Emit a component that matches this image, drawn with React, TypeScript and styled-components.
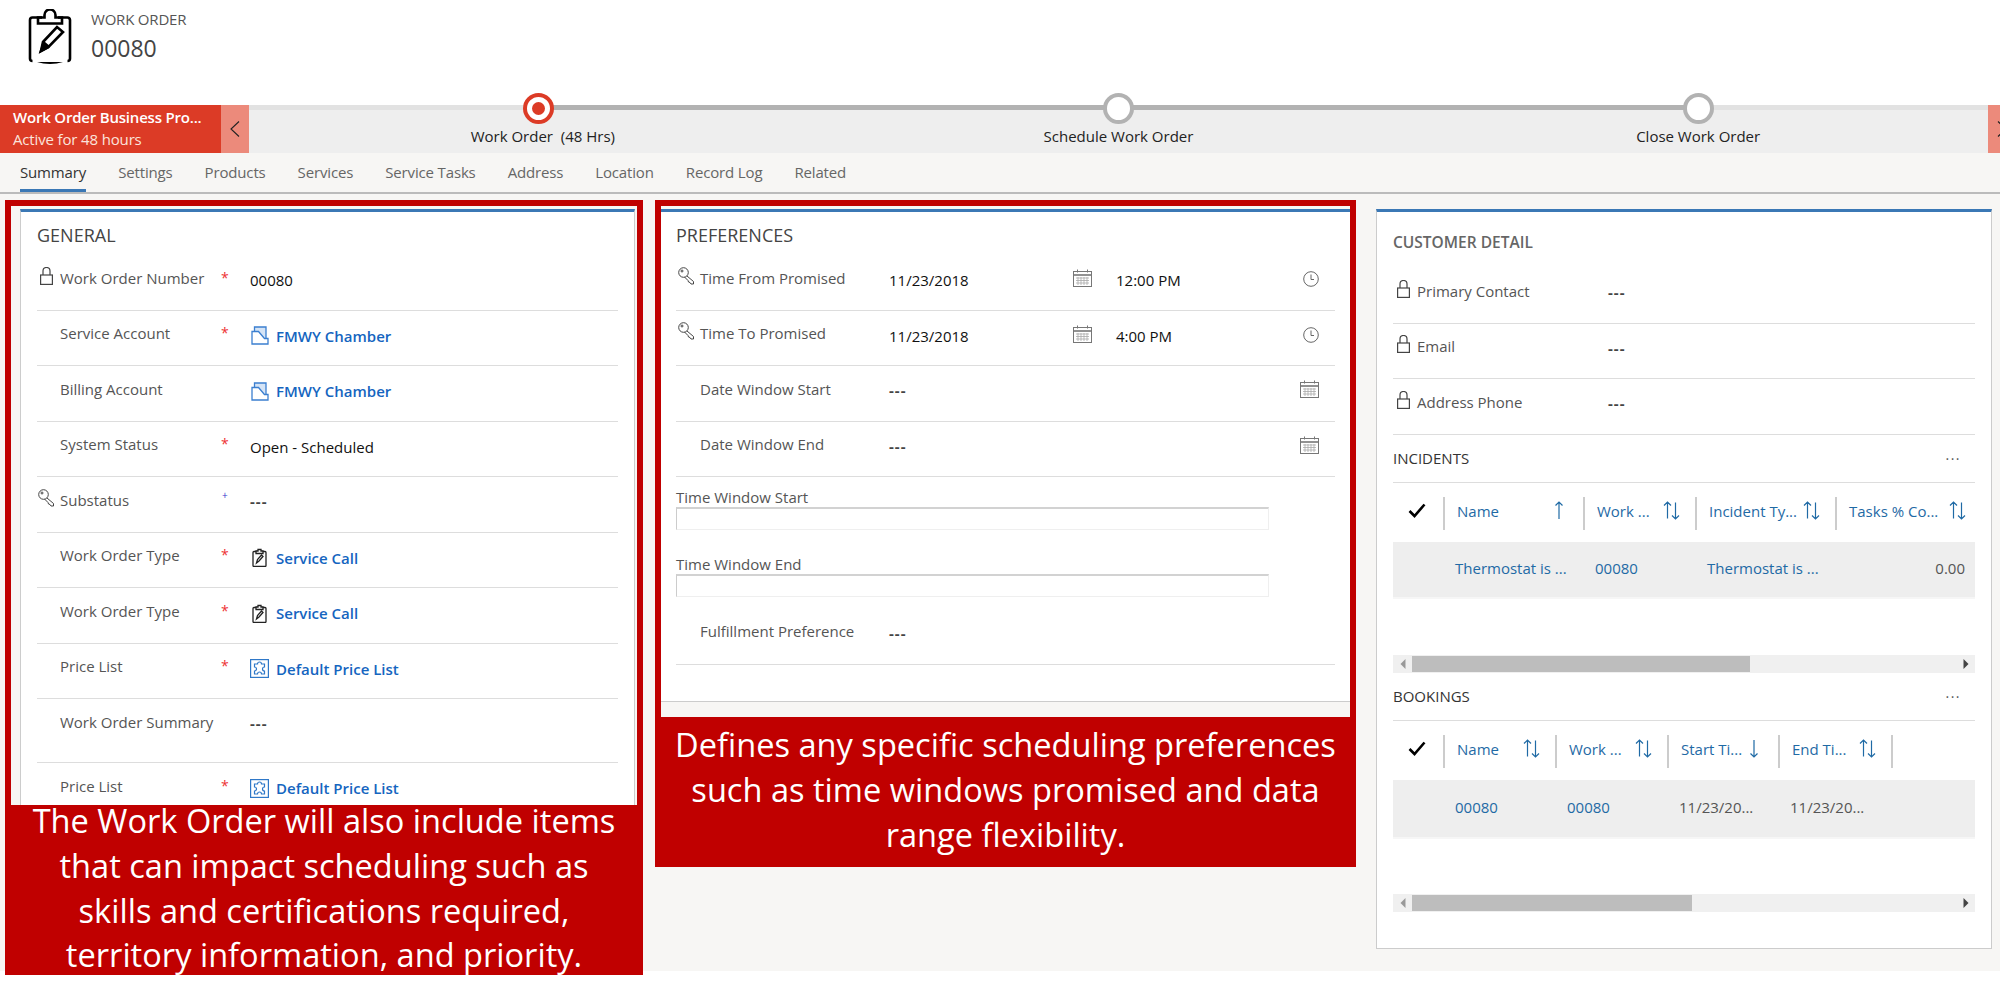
import React from 'react';
import styled, { createGlobalStyle } from 'styled-components';

const GlobalStyle = createGlobalStyle`
  html, body { margin: 0; padding: 0; background: #fff; }
  body {
    font-family: "Open Sans", "Liberation Sans", sans-serif;
    font-size: 15px;
    color: #555;
  }
`;

const Page = styled.div`
  position: relative;
  width: 2000px;
  height: 1001px;
  overflow: hidden;
`;

const Header = styled.header`
  height: 105px;
  display: flex;
  align-items: flex-start;
  padding: 9px 0 0 28px;
  box-sizing: border-box;
  gap: 19px;
`;

const EntityType = styled.div`
  font-size: 15px;
  line-height: 20px;
  letter-spacing: -0.2px;
  color: #555;
`;

const EntityName = styled.div`
  font-size: 23px;
  line-height: 36px;
  color: #444;
  margin-top: 1px;
`;

const ProcessBar = styled.div`
  display: flex;
  height: 48px;
  background: #eee;
`;

const ProcessFlag = styled.div`
  width: 221px;
  box-sizing: border-box;
  background: #dc3b26;
  color: #fff;
  padding: 2px 0 0 13px;
`;

const ProcessName = styled.div`
  font-size: 15px;
  font-weight: 600;
  line-height: 21px;
  letter-spacing: -0.2px;
  white-space: nowrap;
`;

const ProcessAge = styled.div`
  font-size: 15px;
  line-height: 22px;
  letter-spacing: -0.15px;
  color: #fbe3dc;
`;

const ProcessNav = styled.div`
  width: ${p => p.$width}px;
  box-sizing: border-box;
  padding-left: ${p => p.$inset}px;
  background: #ec8a7b;
  display: flex;
  align-items: center;
  overflow: hidden;
  color: #222;
`;

const Stages = styled.div`
  width: 1739px;
  display: grid;
  grid-template-columns: repeat(3, 1fr);
  background:
    linear-gradient(to right, #e2e2e2 0, #e2e2e2 290px, #b2b2b2 290px, #b2b2b2 1449px, #e2e2e2 1449px) top left / 100% 5px no-repeat,
    #eee;
`;

const Stage = styled.div`
  display: flex;
  flex-direction: column;
  align-items: center;
`;

const StageDot = styled.div`
  width: 31px;
  height: 31px;
  margin-top: -12px;
  box-sizing: border-box;
  border-radius: 50%;
  background: #fff;
  border: 4px solid ${p => (p.$active ? '#dc3b26' : '#b2b2b2')};
  display: flex;
  align-items: center;
  justify-content: center;
  &::after {
    content: '';
    display: ${p => (p.$active ? 'block' : 'none')};
    width: 13px;
    height: 13px;
    border-radius: 50%;
    background: #dc3b26;
  }
`;

const StageLabel = styled.div`
  margin-top: 1px;
  padding-left: ${p => p.$shift || 0}px;
  font-size: 15px;
  line-height: 22px;
  color: #222;
  white-space: pre;
`;

const Tabs = styled.nav`
  display: flex;
  gap: 32px;
  height: 41px;
  box-sizing: border-box;
  padding-left: 20px;
  background: #f7f6f4;
  border-bottom: 2px solid #bbb;
`;

const Tab = styled.div`
  position: relative;
  line-height: 39px;
  font-size: 15px;
  letter-spacing: -0.15px;
  color: ${p => (p.$active ? '#333' : '#666')};
  &::after {
    content: '';
    display: ${p => (p.$active ? 'block' : 'none')};
    position: absolute;
    left: 0;
    right: 0;
    bottom: 0;
    height: 3px;
    background: #3b78b5;
  }
`;

const Main = styled.main`
  display: flex;
  align-items: flex-start;
  gap: 24px;
  height: 777px;
  box-sizing: border-box;
  padding: 15px 8px 0 20px;
  background: #f7f6f4;
`;

const Card = styled.section`
  width: ${p => p.$width}px;
  height: ${p => p.$height}px;
  box-sizing: border-box;
  padding: 0 16px;
  background: #fff;
  border: 1px solid #ccc;
  border-top: 3px solid #3b78b5;
  overflow: hidden;
`;

const CardTitle = styled.h2`
  margin: 0;
  height: 43px;
  box-sizing: border-box;
  padding-top: 10px;
  font-size: 18px;
  line-height: 26px;
  font-weight: 400;
  color: #444;
`;

const SubTitle = styled.h3`
  margin: 0;
  height: 56px;
  box-sizing: border-box;
  padding-top: 19px;
  font-size: 15.5px;
  line-height: 22px;
  font-weight: 600;
  color: #666;
`;

const Row = styled.div`
  display: grid;
  grid-template-columns: ${p => p.$columns};
  height: ${p => p.$height || 55.5}px;
  box-sizing: border-box;
  padding-top: ${p => p.$top ?? 11.5}px;
  border-bottom: 1.5px solid #ddd;
  align-items: start;
`;

const IconSlot = styled.div`
  height: 22px;
  margin-top: -2px;
  display: flex;
  align-items: center;
  justify-content: center;
  padding-right: 4px;
  color: #444;
`;

const Label = styled.div`
  font-size: 15px;
  line-height: 22px;
  color: #555;
  white-space: nowrap;
`;

const Required = styled.div`
  font-size: 14px;
  line-height: 20px;
  margin-top: 1px;
  color: #e33;
`;

const Recommended = styled.div`
  font-size: 10px;
  line-height: 12px;
  padding-left: 1px;
  color: #33c;
`;

const Value = styled.div`
  display: flex;
  align-items: center;
  gap: 7px;
  margin-top: 2.5px;
  font-size: 15px;
  line-height: 22px;
  color: #111;
  white-space: nowrap;
`;

const Dashes = styled(Value)`
  margin-top: 1.5px;
  font-weight: 700;
  letter-spacing: 1px;
  color: #444;
`;

const LinkIcon = styled.span`
  width: 19px;
  display: flex;
  justify-content: center;
`;

const LinkText = styled.span`
  color: #1565c0;
  font-weight: 600;
`;

const Cell = styled.div`
  height: 22px;
  margin-top: 0.5px;
  display: flex;
  align-items: center;
  color: #666;
`;

const ClockCell = styled(Cell)`
  margin-top: 1.5px;
`;

const FieldLabel = styled(Label)`
  line-height: 20px;
  margin-top: ${p => p.$top}px;
`;

const TextBox = styled.div`
  width: 593px;
  height: 23px;
  box-sizing: border-box;
  border: 1px solid #efefef;
  border-top: 2px solid #d2d2d2;
  border-left: 1px solid #ccc;
`;

const GridTitle = styled.div`
  display: flex;
  align-items: center;
  justify-content: space-between;
  height: 48px;
  box-sizing: border-box;
  border-bottom: 1.5px solid #ddd;
  font-size: 15px;
  font-weight: 500;
  color: #333;
`;

const More = styled.span`
  padding-right: 14px;
  padding-bottom: 8px;
  letter-spacing: 1.5px;
  font-size: 14px;
  color: #555;
`;

const GridHead = styled.div`
  display: grid;
  grid-template-columns: ${p => p.$columns};
  height: 33px;
  margin: 14px 0 12px;
`;

const CheckCell = styled.div`
  display: flex;
  align-items: center;
  justify-content: flex-start;
  padding: 0 0 5px 15px;
`;

const HeadCell = styled.div`
  display: flex;
  align-items: center;
  justify-content: space-between;
  box-sizing: border-box;
  padding: 0 ${p => p.$pad ?? 15}px 5px 12px;
  border-left: 2px solid #ccc;
  font-size: 15px;
  color: #1f6aa5;
  white-space: nowrap;
  overflow: hidden;
`;

const GridRow = styled.div`
  display: grid;
  grid-template-columns: ${p => p.$columns};
  height: ${p => p.$height}px;
  padding-bottom: 2px;
  align-items: center;
  background: #eee;
  border-bottom: 2px solid #f6f6f6;
  box-sizing: border-box;
`;

const GridCell = styled.div`
  padding-left: 12px;
  font-size: 15px;
  white-space: nowrap;
  color: ${p => (p.$link ? '#1f6aa5' : '#555')};
  ${p => p.$right && 'text-align: right; padding-right: 10px;'}
`;

const ScrollBar = styled.div`
  display: flex;
  align-items: stretch;
  height: 18px;
  margin-top: ${p => p.$top}px;
  background: #f0f0f0;
  color: #555;
`;

const ScrollEnd = styled.div`
  width: 19px;
  display: flex;
  align-items: center;
  justify-content: center;
  color: ${p => p.$color};
`;

const ScrollThumb = styled.div`
  height: 16px;
  margin-top: 1px;
  background: #bdbdbd;
`;

const ScrollTrack = styled.div`
  flex: 1;
`;

const Callout = styled.div`
  position: absolute;
  left: ${p => p.$left}px;
  top: 200px;
  width: ${p => p.$width}px;
  height: ${p => p.$height}px;
  box-sizing: border-box;
  display: flex;
  flex-direction: column;
  border: solid #c00000;
  border-width: 6px 6px 0;
`;

const CalloutWindow = styled.div`
  flex: 1;
`;

const CalloutText = styled.div`
  margin: 0 -6px;
  height: ${p => p.$height}px;
  box-sizing: border-box;
  display: flex;
  align-items: center;
  padding: 0 ${p => p.$inset}px 3px;
  background: #c00000;
  color: #fff;
  font-size: 32.6px;
  line-height: 44.8px;
  text-align: center;
`;

const WorkOrderLogo = () => (
  <svg width="44" height="56" viewBox="0 0 44 56" fill="none" stroke="#000" strokeWidth="2.6">
    <path d="M14 8.500H4.500A2.500 2.500 0 0 0 2 11v38.500c0 1.500 1 2.500 2.500 2.500M30 8.500h9.500A2.500 2.500 0 0 1 42 11v38.500c0 1.500-1 2.500-2.500 2.500" />
    <path d="M10 14.500V8.500h6.500V6a5.500 5.500 0 0 1 11 0v2.500H34v6z" />
    <path d="M13 42l2-9 14-15 6 5-14.500 15z" />
    <path d="M15 33l6 5" />
    <path d="M13 42l2.500-7 4 3.500z" fill="#000" />
    <path d="M9 53c8 2.500 18 2.500 26 0z" fill="#000" stroke="none" />
  </svg>
);

const LockIcon = () => (
  <svg width="13" height="18" viewBox="0 0 13 18" fill="none" stroke="#444" strokeWidth="1.2">
    <rect x="0.600" y="8" width="11.800" height="9.400" />
    <path d="M3 8V4a3.500 3.500 0 0 1 7 0v4" />
  </svg>
);

const KeyIcon = () => (
  <svg width="17" height="18" viewBox="0 0 17 18" fill="none" stroke="#444" strokeWidth="1">
    <circle cx="5.500" cy="5.500" r="4.800" />
    <circle cx="4" cy="4" r="1" />
    <path d="M9 9l6.500 5.500v2.500h-2.500l-1-1.500-1.500-.5-.5-1.500-3.500-3.500" />
  </svg>
);

const AccountIcon = () => (
  <svg width="18" height="19" viewBox="0 0 18 19" fill="none" stroke="#3b7fd0" strokeWidth="1.300">
    <path d="M3.500 6V1h11.500v11" fill="#d5e4f6" />
    <path d="M1 5.500h6.500l6 7H17V18H1z" fill="#fff" />
  </svg>
);

const ClipboardIcon = () => (
  <svg width="15" height="19" viewBox="0 0 15 19" fill="none" stroke="#222" strokeWidth="1.300">
    <rect x="1" y="3.500" width="13" height="15" rx="1" />
    <path d="M4 5.500V3h2V1.500h3V3h2v2.500z" fill="#fff" />
    <path d="M4.500 15l1-3.500 4-4.500 1.500 1.500-4 4.500z" />
  </svg>
);

const PriceListIcon = () => (
  <svg width="19" height="19" viewBox="0 0 19 19" fill="none" stroke="#2f78c8" strokeWidth="1.2">
    <rect x="0.600" y="0.600" width="17.800" height="17.800" />
    <path d="M7.500 5a2 2 0 0 1 4 0h3v3a2 2 0 0 0 0 4v3h-3a2 2 0 0 0-4 0h-3v-3a2 2 0 0 0 0-4V5z" />
  </svg>
);

const CalendarIcon = () => (
  <svg width="19" height="18" viewBox="0 0 19 18" fill="none" stroke="#777" strokeWidth="1">
    <rect x="0.500" y="2.500" width="18" height="15" />
    <path d="M0.500 6h18" strokeWidth="1.600" />
    <path d="M4.500 0.500v3M14.500 0.500v3" />
    <path d="M3 9h13M3 11.500h13M3 14h13M5 8v8M8 8v8M11 8v8M14 8v8" stroke="#aaa" strokeWidth="0.800" />
  </svg>
);

const ClockIcon = () => (
  <svg width="16" height="16" viewBox="0 0 16 16" fill="none" stroke="#666" strokeWidth="1">
    <circle cx="8" cy="8" r="7.300" />
    <path d="M8 3.500V8.500H11" />
  </svg>
);

const Chevron = () => (
  <svg width="10" height="16" viewBox="0 0 10 16" fill="none" stroke="currentColor" strokeWidth="1.100" style={{ flex: 'none' }}>
    <path d="M9 0.500L1 8l8 7.500" />
  </svg>
);

const ChevronRight = () => (
  <svg width="10" height="16" viewBox="0 0 10 16" fill="none" stroke="currentColor" strokeWidth="1.100" style={{ flex: 'none' }}>
    <path d="M1 0.500L9 8 1 15.500" />
  </svg>
);

const Check = () => (
  <svg width="18" height="15" viewBox="0 0 18 15" fill="none" stroke="#000" strokeWidth="2.600">
    <path d="M1.500 8l5 5L16.500 1.500" />
  </svg>
);

const Sort = ({ dir }: { dir: 'up' | 'down' | 'both' }) => (
  <svg width="17" height="19" viewBox="0 0 17 19" fill="none" stroke="#1f6aa5" strokeWidth="1.200" style={{ flex: 'none' }}>
    {dir === 'both' && <path d="M4.500 17.500V1M1 4.500L4.500 1 8 4.500M12.500 1.500V18M9 14.500l3.500 3.500 3.500-3.500" />}
    {dir === 'up' && <path d="M8 18V1M4.500 4.500L8 1l3.500 3.500" />}
    {dir === 'down' && <path d="M8 1v17M4.500 14.500L8 18l3.500-3.500" />}
  </svg>
);

const ScrollArrow = ({ right }: { right?: boolean }) => (
  <svg width="6" height="10" viewBox="0 0 6 10" fill="currentColor">
    <path d={right ? 'M0.500 0L5.500 5 0.500 10z' : 'M5.500 0L0.500 5l5 5z'} />
  </svg>
);

const GENERAL_COLUMNS = '23px 161px 29px 1fr';
const DATETIME_COLUMNS = '24px 189px 184px 43px 187px 1fr';
const DATE_COLUMNS = '24px 189px 1fr 35px';
const CUSTOMER_COLUMNS = '24px 191px 1fr';
const INCIDENT_COLUMNS = '50px 140px 112px 140px 140px';
const BOOKING_COLUMNS = '50px 112px 112px 111px 113px 1fr';

const generalRows = [
  { label: 'Work Order Number', icon: <LockIcon />, star: true, value: '00080' },
  { label: 'Service Account', star: true, link: 'FMWY Chamber', linkIcon: <AccountIcon /> },
  { label: 'Billing Account', link: 'FMWY Chamber', linkIcon: <AccountIcon /> },
  { label: 'System Status', star: true, value: 'Open - Scheduled' },
  { label: 'Substatus', icon: <KeyIcon />, recommended: true, dashes: true },
  { label: 'Work Order Type', star: true, link: 'Service Call', linkIcon: <ClipboardIcon /> },
  { label: 'Work Order Type', star: true, link: 'Service Call', linkIcon: <ClipboardIcon /> },
  { label: 'Price List', star: true, link: 'Default Price List', linkIcon: <PriceListIcon /> },
  { label: 'Work Order Summary', dashes: true, height: 64 },
  { label: 'Price List', star: true, link: 'Default Price List', linkIcon: <PriceListIcon /> },
];

const incidentHeads = [
  { name: 'Name', dir: 'up' },
  { name: 'Work ...', dir: 'both' },
  { name: 'Incident Ty...', dir: 'both' },
  { name: 'Tasks % Co...', dir: 'both', pad: 9 },
] as const;

const bookingHeads = [
  { name: 'Name', dir: 'both' },
  { name: 'Work ...', dir: 'both' },
  { name: 'Start Ti...', dir: 'down' },
  { name: 'End Ti...', dir: 'both' },
] as const;

const tabs = ['Summary', 'Settings', 'Products', 'Services', 'Service Tasks', 'Address', 'Location', 'Record Log', 'Related'];

export default function App() {
  return (
    <Page>
      <GlobalStyle />
      <Header>
        <WorkOrderLogo />
        <div>
          <EntityType>WORK ORDER</EntityType>
          <EntityName>00080</EntityName>
        </div>
      </Header>

      <ProcessBar>
        <ProcessFlag>
          <ProcessName>Work Order Business Pro...</ProcessName>
          <ProcessAge>Active for 48 hours</ProcessAge>
        </ProcessFlag>
        <ProcessNav $width={28} $inset={9}><Chevron /></ProcessNav>
        <Stages>
          <Stage>
            <StageDot $active />
            <StageLabel $shift={8}>Work Order  (48 Hrs)</StageLabel>
          </Stage>
          <Stage>
            <StageDot />
            <StageLabel>Schedule Work Order</StageLabel>
          </Stage>
          <Stage>
            <StageDot />
            <StageLabel>Close Work Order</StageLabel>
          </Stage>
        </Stages>
        <ProcessNav $width={12} $inset={9}><ChevronRight /></ProcessNav>
      </ProcessBar>

      <Tabs>
        {tabs.map((t, i) => (
          <Tab key={t} $active={i === 0}>{t}</Tab>
        ))}
      </Tabs>

      <Main>
        <Card $width={615} $height={700}>
          <CardTitle>GENERAL</CardTitle>
          {generalRows.map((r, i) => (
            <Row key={i} $columns={GENERAL_COLUMNS} $height={r.height}>
              <IconSlot>{r.icon}</IconSlot>
              <Label>{r.label}</Label>
              {r.recommended ? <Recommended>+</Recommended> : <Required>{r.star ? '*' : ''}</Required>}
              {r.dashes ? (
                <Dashes>---</Dashes>
              ) : r.link ? (
                <Value><LinkIcon>{r.linkIcon}</LinkIcon><LinkText>{r.link}</LinkText></Value>
              ) : (
                <Value>{r.value}</Value>
              )}
            </Row>
          ))}
        </Card>

        <Card $width={693} $height={493}>
          <CardTitle>PREFERENCES</CardTitle>
          <Row $columns={DATETIME_COLUMNS}>
            <IconSlot><KeyIcon /></IconSlot>
            <Label>Time From Promised</Label>
            <Value>11/23/2018</Value>
            <Cell><CalendarIcon /></Cell>
            <Value>12:00 PM</Value>
            <ClockCell><ClockIcon /></ClockCell>
          </Row>
          <Row $columns={DATETIME_COLUMNS}>
            <IconSlot><KeyIcon /></IconSlot>
            <Label>Time To Promised</Label>
            <Value>11/23/2018</Value>
            <Cell><CalendarIcon /></Cell>
            <Value>4:00 PM</Value>
            <ClockCell><ClockIcon /></ClockCell>
          </Row>
          <Row $columns={DATE_COLUMNS}>
            <IconSlot />
            <Label>Date Window Start</Label>
            <Dashes>---</Dashes>
            <Cell><CalendarIcon /></Cell>
          </Row>
          <Row $columns={DATE_COLUMNS}>
            <IconSlot />
            <Label>Date Window End</Label>
            <Dashes>---</Dashes>
            <Cell><CalendarIcon /></Cell>
          </Row>
          <FieldLabel $top={10}>Time Window Start</FieldLabel>
          <TextBox />
          <FieldLabel $top={24}>Time Window End</FieldLabel>
          <TextBox />
          <Row $columns={DATE_COLUMNS} $height={68} $top={23}>
            <IconSlot />
            <Label>Fulfillment Preference</Label>
            <Dashes>---</Dashes>
          </Row>
        </Card>

        <Card $width={616} $height={740}>
          <SubTitle>CUSTOMER DETAIL</SubTitle>
          <Row $columns={CUSTOMER_COLUMNS}>
            <IconSlot><LockIcon /></IconSlot>
            <Label>Primary Contact</Label>
            <Dashes>---</Dashes>
          </Row>
          <Row $columns={CUSTOMER_COLUMNS}>
            <IconSlot><LockIcon /></IconSlot>
            <Label>Email</Label>
            <Dashes>---</Dashes>
          </Row>
          <Row $columns={CUSTOMER_COLUMNS}>
            <IconSlot><LockIcon /></IconSlot>
            <Label>Address Phone</Label>
            <Dashes>---</Dashes>
          </Row>

          <GridTitle>INCIDENTS<More>...</More></GridTitle>
          <GridHead $columns={INCIDENT_COLUMNS}>
            <CheckCell><Check /></CheckCell>
            {incidentHeads.map(h => (
              <HeadCell key={h.name} $pad={'pad' in h ? h.pad : undefined}>{h.name}<Sort dir={h.dir} /></HeadCell>
            ))}
          </GridHead>
          <GridRow $columns={INCIDENT_COLUMNS} $height={57}>
            <span />
            <GridCell $link>Thermostat is ...</GridCell>
            <GridCell $link>00080</GridCell>
            <GridCell $link>Thermostat is ...</GridCell>
            <GridCell $right>0.00</GridCell>
          </GridRow>
          <ScrollBar $top={56}>
            <ScrollEnd $color="#999"><ScrollArrow /></ScrollEnd>
            <ScrollThumb style={{ width: 338 }} />
            <ScrollTrack />
            <ScrollEnd $color="#444"><ScrollArrow right /></ScrollEnd>
          </ScrollBar>

          <GridTitle>BOOKINGS<More>...</More></GridTitle>
          <GridHead $columns={BOOKING_COLUMNS}>
            <CheckCell><Check /></CheckCell>
            {bookingHeads.map(h => (
              <HeadCell key={h.name}>{h.name}<Sort dir={h.dir} /></HeadCell>
            ))}
            <HeadCell />
          </GridHead>
          <GridRow $columns={BOOKING_COLUMNS} $height={59}>
            <span />
            <GridCell $link>00080</GridCell>
            <GridCell $link>00080</GridCell>
            <GridCell>11/23/20...</GridCell>
            <GridCell>11/23/20...</GridCell>
          </GridRow>
          <ScrollBar $top={55}>
            <ScrollEnd $color="#999"><ScrollArrow /></ScrollEnd>
            <ScrollThumb style={{ width: 280 }} />
            <ScrollTrack />
            <ScrollEnd $color="#444"><ScrollArrow right /></ScrollEnd>
          </ScrollBar>
        </Card>
      </Main>

      <Callout $left={5} $width={638} $height={775}>
        <CalloutWindow />
        <CalloutText $height={170} $inset={19}>
          The Work Order will also include items that can impact scheduling such as skills and certifications required, territory information, and priority.
        </CalloutText>
      </Callout>
      <Callout $left={655} $width={701} $height={667}>
        <CalloutWindow />
        <CalloutText $height={150} $inset={8}>
          Defines any specific scheduling preferences such as time windows promised and data range flexibility.
        </CalloutText>
      </Callout>
    </Page>
  );
}
